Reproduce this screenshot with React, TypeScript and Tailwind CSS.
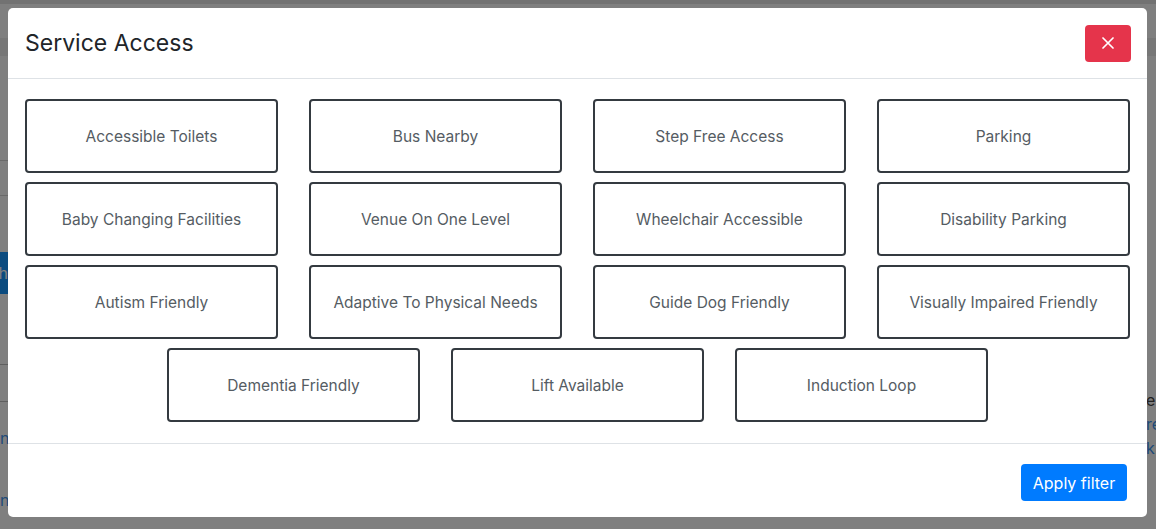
import React from "react";

const items = [
  "Accessible Toilets",
  "Bus Nearby",
  "Step Free Access",
  "Parking",
  "Baby Changing Facilities",
  "Venue On One Level",
  "Wheelchair Accessible",
  "Disability Parking",
  "Autism Friendly",
  "Adaptive To Physical Needs",
  "Guide Dog Friendly",
  "Visually Impaired Friendly",
  "Dementia Friendly",
  "Lift Available",
  "Induction Loop",
];

export default function App() {
  return (
    <div
      className="relative h-[529px] w-[1156px] overflow-hidden bg-white"
      style={{ fontFamily: "Inter, 'Open Sans', Roboto, sans-serif" }}
    >
      {/* underlying page (seen dimmed behind the overlay) */}
      <div className="flex h-full flex-col">
        <div className="h-[4px] bg-[#e4e4e4]" />
        <div className="flex flex-1 justify-between">
          <div className="flex w-[10px] flex-col overflow-hidden">
            <div className="mt-[34px] h-[18px] bg-[#eeeeee]" />
            <div className="mt-[104px] h-[36px] border-y border-[#d4d4d4]" />
            <div className="mt-[56px] flex h-[42px] items-center justify-end bg-[#1797ff] pr-[2px] text-[16px] text-white">
              <span className="whitespace-nowrap">ch</span>
            </div>
            <div className="mt-[70px] h-[38px] border-y border-[#bfbfbf]" />
            <div className="mt-[28px] text-[16px] leading-none text-[#3e94f0]">n</div>
            <div className="mt-[46px] text-[16px] leading-none text-[#3e94f0]">n</div>
          </div>
          <div className="flex w-[10px] flex-col overflow-hidden">
            <div className="mt-[34px] h-[18px] bg-[#eeeeee]" />
            <div className="mt-[332px] text-[16px] leading-[24px] text-[#444]">e</div>
            <div className="text-[16px] leading-[24px] text-[#3e94f0]">re</div>
            <div className="text-[16px] leading-[24px] text-[#3e94f0]">k</div>
          </div>
        </div>
      </div>

      {/* overlay + modal */}
      <div className="absolute inset-0 bg-black/50 pl-[8px] pt-[8px]">
        <div className="flex h-[509px] w-[1139px] flex-col rounded-[5px] bg-white">
          <div className="flex h-[71px] items-center justify-between border-b border-[#dee2e6] pl-[17px] pr-[16px]">
            <h2 className="text-[23px] font-normal leading-none text-[#212529]">
              Service Access
            </h2>
            <button className="flex h-[37px] w-[46px] items-center justify-center rounded-[4px] bg-[#e5344b]">
              <svg width="12" height="12" viewBox="0 0 12 12" fill="none">
                <path d="M1 1L11 11M11 1L1 11" stroke="white" strokeWidth="1.7" strokeLinecap="round" />
              </svg>
            </button>
          </div>
          <div className="flex flex-wrap justify-center gap-x-[31px] gap-y-[9px] px-[17px] pb-[21px] pt-[20px]">
            {items.map((t) => (
              <button
                key={t}
                className="flex h-[74px] w-[253px] items-center justify-center rounded-[4px] border-2 border-[#343a40] bg-white pt-[1px] text-[15.5px] text-[#555c63]"
              >
                {t}
              </button>
            ))}
          </div>
          <div className="flex flex-1 items-start justify-end border-t border-[#dee2e6] pr-[20px] pt-[20px]">
            <button className="h-[37px] w-[106px] rounded-[4px] bg-[#007bff] text-[16px] text-white">
              Apply filter
            </button>
          </div>
        </div>
      </div>
    </div>
  );
}
